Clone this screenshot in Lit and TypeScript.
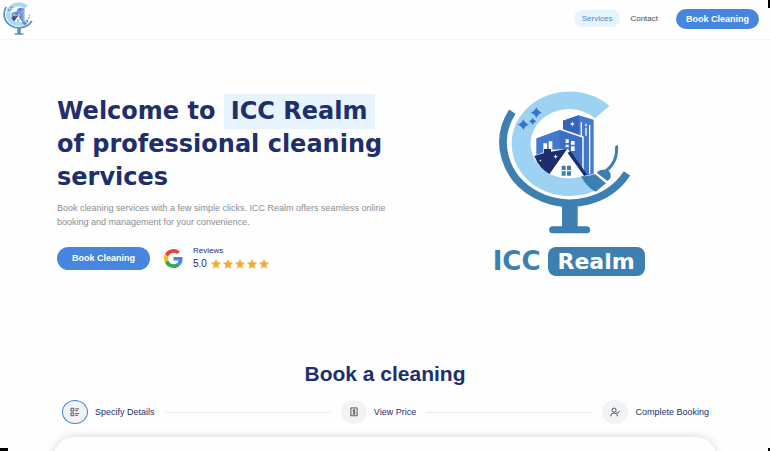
import { LitElement, html, css, svg } from "lit";
import { customElement } from "lit/decorators.js";

@customElement("globe-mark")
class GlobeMark extends LitElement {
  static styles = css`
    :host { display: block; }
    .art { display: block; width: 100%; height: 100%; }
  `;

  render() {
    return html`<svg class="art" viewBox="54 27 402 432" preserveAspectRatio="none" role="img" aria-label="ICC Realm emblem">
      <path d="M97 92 A199 181 0 1 0 441 277" fill="none" stroke="#3d7fb0" stroke-width="23" />
      <path d="M246 372H293V436H320A10.500 10.500 0 0 1 320 457H218A10.500 10.500 0 0 1 218 436H246Z" fill="#3d7fb0" />
      <path d="M388 75 A173 157 0 1 0 362 320 L306 286 A115 104 0 1 1 345 112 Z" fill="#9dd2f3" />
      <path d="M249 119 L296 103 L341 116 V278 L318 284 L307 268 V168 L249 148 Z" fill="#4379cd" />
      <path d="M249 119 L296 103 V160 L249 144 Z" fill="#3563bd" />
      <path d="M304 124V166M318 128V136M318 140V164M329 132V278" stroke="#fff" stroke-width="4" fill="none" />
      <path d="M277 121l2 6 6 2-6 2-2 6-2-6-6-2 6-2z" fill="#fff" />
      <path d="M169 170 L239 146 L307 169 V262 L264 204 L211 206 L169 222Z" fill="#4379cd" />
      <path d="M239 146 L307 169 V262 L264 204 L239 202Z" fill="#3563bd" opacity=".5" />
      <path d="M169 170 L239 144 L309 168 V268" fill="none" stroke="#fff" stroke-width="4" />
      <path d="M190 213V187H201V206H206V181H217V207" fill="#fff" />
      <path d="M257 175h9v11h-9zM273 180h11v11h-11zM257 191h9v8h-9zM273 196h11v14h-11z" fill="#fff" />
      <path d="M163 225 L192 216 V204 H213 V212 L262 203 L209 279 Q176 261 163 225Z" fill="#1c2f6c" />
      <path d="M227 220l2 5 5 2-5 2-2 5-2-5-5-2 5-2zM181 235l1 3 3 1-3 1-1 3-1-3-3-1 3-1z" fill="#fff" />
      <path d="M209 280 L262 204 L318 285 Q265 298 209 280Z" fill="#fff" />
      <path d="M267 213 L317 283" stroke="#1c2f6c" stroke-width="10" />
      <path d="M245 254h12v13h-12zM261 254h12v13h-12zM245 271h12v13h-12zM261 271h12v13h-12z" fill="#3d7fb0" />
      <path d="M303 285 Q328 287 345 279 L378 307 L347 332 Q318 318 303 285Z" fill="#3d7fb0" />
      <path d="M350 275 Q357 266 370 266 Q386 262 391 277 Q396 292 382 300 Z" fill="#3d7fb0" />
      <path d="M346 276 L380 304" stroke="#fff" stroke-width="4" />
      <path d="M379 269 Q412 244 410 197" fill="none" stroke="#3d7fb0" stroke-width="9" stroke-linecap="round" />
      <g fill="#3a72c6">
        <path d="M169 79Q173 91 186 95Q173 99 169 111Q165 99 152 95Q165 91 169 79Z" />
        <path d="M130 115Q134 127 147 131Q134 135 130 147Q126 135 113 131Q126 127 130 115Z" />
        <path d="M158 111Q161 118 169 121Q161 124 158 132Q155 124 147 121Q155 118 158 111Z" />
      </g>
    </svg>`;
  }
}

const stepIcons = {
  details: svg`<path d="M1.500 2h4.500v4.500H1.500zM1.500 9.500h4.500v4.500H1.500zM8.500 3h6M8.500 6h4M8.500 10.500h6M8.500 13.500h4" />`,
  price: svg`<path d="M3 1.500h10v13l-2-1-1.500 1-1.500-1-1.500 1-1.500-1-2 1zM10 5Q6.500 4 6.500 6T8 7.500 9.500 10 6 10.500M8 3.500v8.500" />`,
  complete: svg`<circle cx="6.500" cy="5" r="3.300" /><path d="M1 15Q1 9.500 6.500 9.500T12 15M10.500 8l2 2 3-4" />`,
};

const steps = [
  { label: "Specify Details", icon: stepIcons.details, active: true },
  { label: "View Price", icon: stepIcons.price, active: false },
  { label: "Complete Booking", icon: stepIcons.complete, active: false },
];

@customElement("app-root")
class AppRoot extends LitElement {
  static styles = css`
    :host {
      display: block;
      position: relative;
      min-height: 100vh;
      overflow: hidden;
      background: #fefefe;
      color: #1f2f6b;
      font-family: "Liberation Sans", Arial, sans-serif;
      font-size: 9px;
    }
    * { box-sizing: border-box; }
    .header {
      display: flex;
      align-items: center;
      justify-content: space-between;
      height: 40px;
      padding: 0 11px 2px 3px;
      border-bottom: 1px solid #f4f4f5;
    }
    .brand { display: block; opacity: .85; }
    .brand-mark { width: 30px; height: 33px; }
    .nav { display: flex; align-items: center; }
    .link {
      padding: 3px 8px;
      border-radius: 9px;
      color: #4b4b4f;
      font-size: 8px;
      line-height: 11px;
      text-decoration: none;
    }
    .link.current { background: #e6f4fe; color: #4a86d8; }
    .nav .link + .link { margin-left: 2px; }
    .button {
      border: 0;
      border-radius: 12px;
      background: #4686df;
      color: #fff;
      font: bold 9px "Liberation Sans", Arial, sans-serif;
      height: 20px;
      padding: 0 10px;
    }
    .nav .button { margin-left: 10px; }
    .button.large { height: 23px; padding: 0 15px; }
    .hero {
      display: grid;
      grid-template-columns: 56% 44%;
      padding: 50px 57px 0;
    }
    .title {
      margin: 5px 0 0;
      font: bold 24px/33px "DejaVu Sans", sans-serif;
    }
    .mark { padding: 3px 7px 4px; background: #e7f3fd; }
    .lead { margin: 7px 0 0; color: #8b8d91; line-height: 14px; }
    .actions { display: flex; align-items: center; margin-top: 16px; }
    .google { width: 19px; height: 19px; margin: 0 10px 0 14px; }
    .reviews { font-size: 8px; line-height: 12px; }
    .score { display: flex; align-items: center; font-size: 10px; line-height: 14px; }
    .stars { display: flex; gap: 2px; margin-left: 4px; }
    .star { width: 10px; height: 10px; fill: #efad3f; }
    .logo { display: flex; flex-direction: column; align-items: center; }
    .logo-mark { width: 134px; height: 144px; margin-right: 8px; }
    .wordmark {
      display: flex;
      align-items: center;
      gap: 7px;
      margin-top: 13px;
      color: #3d7fb0;
      font: bold 22px/29px "DejaVu Sans", sans-serif;
    }
    .wordmark-plain { font-size: 26px; }
    .wordmark-box { padding: 0 10px; border-radius: 8px; background: #3d7fb0; color: #fff; }
    .booking { margin-top: 84px; }
    .booking-title { margin: 0; font-size: 21px; line-height: 28px; text-align: center; }
    .steps {
      display: flex;
      align-items: center;
      margin: 12px 0 13px;
      padding: 0 61px 0 62px;
      list-style: none;
    }
    .step { display: flex; align-items: center; }
    .step:not(:last-child) { flex: 1 1 auto; }
    .step:not(:last-child)::after {
      content: "";
      flex: 1;
      height: 1px;
      margin: 0 10px;
      background: #e8e9ec;
    }
    .step-icon {
      display: grid;
      place-items: center;
      width: 26px;
      height: 24px;
      margin-right: 7px;
      border-radius: 50%;
      background: #f1f3f4;
    }
    .step-icon.active { border: 1px solid #4686df; }
    .glyph { width: 10px; height: 10px; fill: none; stroke: #4c4f54; stroke-width: 1.500; }
    .panel {
      height: 40px;
      margin: 0 54px -26px;
      border-radius: 20px 20px 0 0;
      background: #fefefe;
      box-shadow: 0 0 10px rgba(0, 0, 0, .16);
    }
    .corner { position: absolute; background: #000; width: 2px; height: 3px; }
    .corner.top { top: 0; right: 0; height: 8px; }
    .corner.left { bottom: 0; left: 0; width: 8px; }
    .corner.right { bottom: 0; right: 0; }
  `;

  render() {
    return html`
      <header class="header">
        <a class="brand" href="#home"><globe-mark class="brand-mark"></globe-mark></a>
        <nav class="nav">
          <a class="link current" href="#services">Services</a>
          <a class="link" href="#contact">Contact</a>
          <button class="button">Book Cleaning</button>
        </nav>
      </header>
      <main>
        <section class="hero">
          <div>
            <h1 class="title">Welcome to <span class="mark">ICC Realm</span><br />of professional cleaning<br />services</h1>
            <p class="lead">Book cleaning services with a few simple clicks. ICC Realm offers seamless online<br />booking and management for your convenience.</p>
            <div class="actions">
              <button class="button large">Book Cleaning</button>
              <svg class="google" viewBox="0 0 48 48" role="img" aria-label="Google">
                <path fill="#EA4335" d="M24 9.500c3.540 0 6.710 1.220 9.210 3.600l6.850-6.850C35.900 2.380 30.470 0 24 0 14.620 0 6.510 5.380 2.560 13.220l7.980 6.190C12.430 13.720 17.740 9.500 24 9.500z" />
                <path fill="#4285F4" d="M46.980 24.550c0-1.570-.15-3.090-.38-4.550H24v9.020h12.940c-.58 2.960-2.260 5.480-4.780 7.180l7.730 6c4.510-4.180 7.090-10.360 7.090-17.650z" />
                <path fill="#FBBC05" d="M10.530 28.590c-.48-1.450-.76-2.990-.76-4.590s.27-3.140.76-4.590l-7.980-6.190C.92 16.460 0 20.120 0 24s.92 7.540 2.560 10.780l7.970-6.190z" />
                <path fill="#34A853" d="M24 48c6.480 0 11.930-2.130 15.890-5.810l-7.730-6c-2.150 1.450-4.920 2.300-8.160 2.300-6.260 0-11.570-4.220-13.470-9.910l-7.980 6.190C6.510 42.620 14.620 48 24 48z" />
              </svg>
              <div class="reviews">
                <div>Reviews</div>
                <div class="score">
                  <span>5.0</span>
                  <span class="stars">
                    ${[1, 2, 3, 4, 5].map(() => html`<svg class="star" viewBox="0 0 20 20"><path d="M10 0l3 6.600 7 .800-5.200 4.900 1.400 7.200L10 16l-6.200 3.500 1.400-7.200L0 7.400l7-.800z" /></svg>`)}
                  </span>
                </div>
              </div>
            </div>
          </div>
          <div class="logo">
            <globe-mark class="logo-mark"></globe-mark>
            <div class="wordmark"><span class="wordmark-plain">ICC</span><span class="wordmark-box">Realm</span></div>
          </div>
        </section>
        <section class="booking">
          <h2 class="booking-title">Book a cleaning</h2>
          <ol class="steps">
            ${steps.map((s) => html`<li class="step">
              <span class="step-icon ${s.active ? "active" : ""}"><svg class="glyph" viewBox="0 0 16 16">${s.icon}</svg></span>
              <span>${s.label}</span>
            </li>`)}
          </ol>
          <div class="panel"></div>
        </section>
      </main>
      <span class="corner top"></span>
      <span class="corner left"></span>
      <span class="corner right"></span>
    `;
  }
}
